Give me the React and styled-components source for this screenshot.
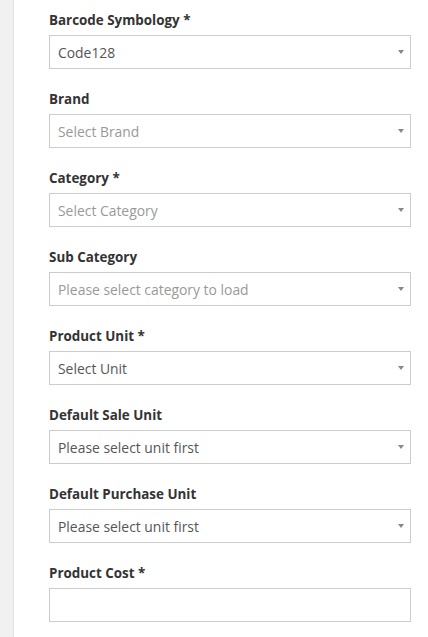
import React from "react";
import styled, { createGlobalStyle } from "styled-components";

const Global = createGlobalStyle`
  html, body { margin: 0; padding: 0; background: #ffffff; }
  body { font-family: "Open Sans", "Noto Sans", sans-serif; }
`;

const Shell = styled.div`
  display: flex;
  min-height: 637px;
`;

const Gutter = styled.div`
  width: 13px;
  flex: none;
  background: #f1f1f1;
  border-right: 1px solid #e3e3e3;
`;

const Form = styled.div`
  flex: 1;
  padding: 10px 17px 0 35px;
`;

const Group = styled.div`
  margin-bottom: 20px;
`;

const Label = styled.div`
  font-size: 13.4px;
  font-weight: 700;
  line-height: 20px;
  color: #333333;
  margin-bottom: 5px;
`;

const Box = styled.div`
  box-sizing: border-box;
  height: 34px;
  border: 1px solid #cccccc;
  display: flex;
  align-items: center;
  padding: 0 6px 0 8px;
  font-size: 13.9px;
  color: ${(p) => (p.$placeholder ? "#999999" : "#555555")};
`;

const Value = styled.span`
  flex: 1;
`;

const Caret = styled.span`
  width: 0;
  height: 0;
  border-left: 3px solid transparent;
  border-right: 3px solid transparent;
  border-top: 4px solid #888888;
`;

const fields = [
  { label: "Barcode Symbology *", value: "Code128" },
  { label: "Brand", value: "Select Brand", placeholder: true },
  { label: "Category *", value: "Select Category", placeholder: true },
  { label: "Sub Category", value: "Please select category to load", placeholder: true },
  { label: "Product Unit *", value: "Select Unit" },
  { label: "Default Sale Unit", value: "Please select unit first" },
  { label: "Default Purchase Unit", value: "Please select unit first" },
];

export default function App() {
  return (
    <>
      <Global />
      <Shell>
        <Gutter />
        <Form>
          {fields.map((f) => (
            <Group key={f.label}>
              <Label>{f.label}</Label>
              <Box $placeholder={f.placeholder}>
                <Value>{f.value}</Value>
                <Caret />
              </Box>
            </Group>
          ))}
          <Group>
            <Label>Product Cost *</Label>
            <Box />
          </Group>
        </Form>
      </Shell>
    </>
  );
}
